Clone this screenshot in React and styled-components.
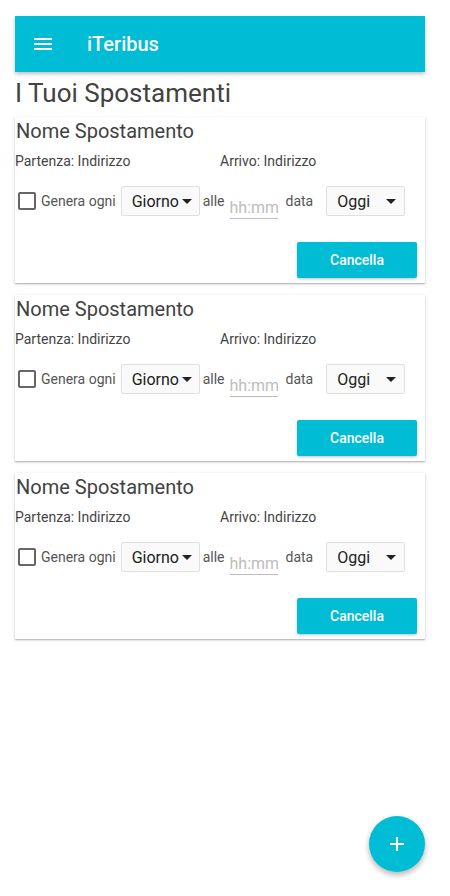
import styled, { createGlobalStyle } from 'styled-components';

const GlobalStyle = createGlobalStyle`
  body {
    margin: 0;
    background: #ffffff;
    font-family: Roboto, "Noto Sans", sans-serif;
  }
`;

const Page = styled.div`
  width: 410px;
  margin-left: 15px;
  padding-top: 16px;
  min-height: 100vh;
  box-sizing: border-box;
`;

const Toolbar = styled.header`
  height: 56px;
  background-color: #00bcd4;
  display: flex;
  align-items: center;
  padding-left: 19px;
  box-shadow: 0 2px 4px rgba(0, 0, 0, 0.25);
`;

const MenuIcon = styled.div`
  width: 18px;
  height: 12px;
  display: flex;
  flex-direction: column;
  justify-content: space-between;

  span {
    display: block;
    height: 2px;
    background: #fff;
  }
`;

const AppName = styled.span`
  margin-left: 35px;
  color: #fff;
  font-size: 20px;
  font-weight: 500;
`;

const Title = styled.h1`
  margin: 6px 0 9px;
  font-size: 26px;
  line-height: 30px;
  font-weight: 400;
  color: #424242;
`;

const Card = styled.section`
  background: #fff;
  margin-bottom: 12px;
  box-shadow: 0 1px 3px rgba(0, 0, 0, 0.2), 0 1px 1px rgba(0, 0, 0, 0.14);
  display: flex;
  flex-direction: column;
`;

const CardTitle = styled.h2`
  margin: 0 0 0 1px;
  font-size: 20px;
  line-height: 28px;
  font-weight: 400;
  color: #424242;
`;

const Addresses = styled.div`
  display: grid;
  grid-template-columns: 1fr 1fr;
  margin-top: 6px;
  font-size: 14px;
  line-height: 20px;
  color: #444;
`;

const OptionsRow = styled.div`
  display: flex;
  align-items: center;
  height: 30px;
  margin-top: 15px;
  font-size: 14px;
  color: #555;
`;

const CheckBox = styled.span`
  width: 18px;
  height: 18px;
  box-sizing: border-box;
  border: 2px solid #666;
  border-radius: 2px;
  margin-left: 3px;
`;

const Label = styled.span`
  margin-left: ${(p) => p.$gap || 0}px;
`;

const Select = styled.div`
  width: 79px;
  height: 30px;
  box-sizing: border-box;
  margin-left: ${(p) => p.$gap || 0}px;
  padding: 0 8px 0 10px;
  display: flex;
  align-items: center;
  justify-content: space-between;
  background: #fafafa;
  border: 1px solid #e0e0e0;
  border-radius: 2px;
  font-size: 16px;
  color: #212121;
`;

const Caret = styled.span`
  width: 0;
  height: 0;
  margin-left: 3px;
  border-left: 5px solid transparent;
  border-right: 5px solid transparent;
  border-top: 5px solid #212121;
`;

const TimeInput = styled.input`
  width: 48px;
  margin: 15px 0 0 5px;
  padding: 0 0 1px;
  border: none;
  border-bottom: 1px solid #bdbdbd;
  background: transparent;
  font-family: inherit;
  font-size: 16px;
  color: #212121;
  outline: none;

  &::placeholder {
    color: #bdbdbd;
  }
`;

const Actions = styled.div`
  display: flex;
  justify-content: flex-end;
  margin: 26px 8px 5px 0;
`;

const CancelButton = styled.button`
  width: 120px;
  height: 36px;
  border: none;
  border-radius: 2px;
  background-color: #00bcd4;
  color: #fff;
  font-family: inherit;
  font-size: 14px;
  font-weight: 500;
  box-shadow: 0 1px 3px rgba(0, 0, 0, 0.25);
  cursor: pointer;
`;

const Fab = styled.button`
  position: fixed;
  right: 25px;
  bottom: 24px;
  width: 56px;
  height: 56px;
  border-radius: 50%;
  border: none;
  background-color: #00bcd4;
  box-shadow: 0 3px 6px rgba(0, 0, 0, 0.2), 0 3px 6px rgba(0, 0, 0, 0.12);
  display: flex;
  align-items: center;
  justify-content: center;
  cursor: pointer;
`;

const trips = [1, 2, 3];

function TripCard() {
  return (
    <Card>
      <CardTitle>Nome Spostamento</CardTitle>
      <Addresses>
        <span>Partenza: Indirizzo</span>
        <span>Arrivo: Indirizzo</span>
      </Addresses>
      <OptionsRow>
        <CheckBox />
        <Label $gap={5}>Genera ogni</Label>
        <Select $gap={5}>
          Giorno
          <Caret />
        </Select>
        <Label $gap={3}>alle</Label>
        <TimeInput placeholder="hh:mm" />
        <Label $gap={8}>data</Label>
        <Select $gap={13}>
          Oggi
          <Caret />
        </Select>
      </OptionsRow>
      <Actions>
        <CancelButton>Cancella</CancelButton>
      </Actions>
    </Card>
  );
}

export default function App() {
  return (
    <>
      <GlobalStyle />
      <Page>
        <Toolbar>
          <MenuIcon>
            <span />
            <span />
            <span />
          </MenuIcon>
          <AppName>iTeribus</AppName>
        </Toolbar>
        <Title>I Tuoi Spostamenti</Title>
        {trips.map((id) => (
          <TripCard key={id} />
        ))}
      </Page>
      <Fab aria-label="Aggiungi">
        <svg width="16" height="16" viewBox="0 0 16 16">
          <path d="M8 1v14M1 8h14" stroke="#fff" strokeWidth="2" />
        </svg>
      </Fab>
    </>
  );
}
